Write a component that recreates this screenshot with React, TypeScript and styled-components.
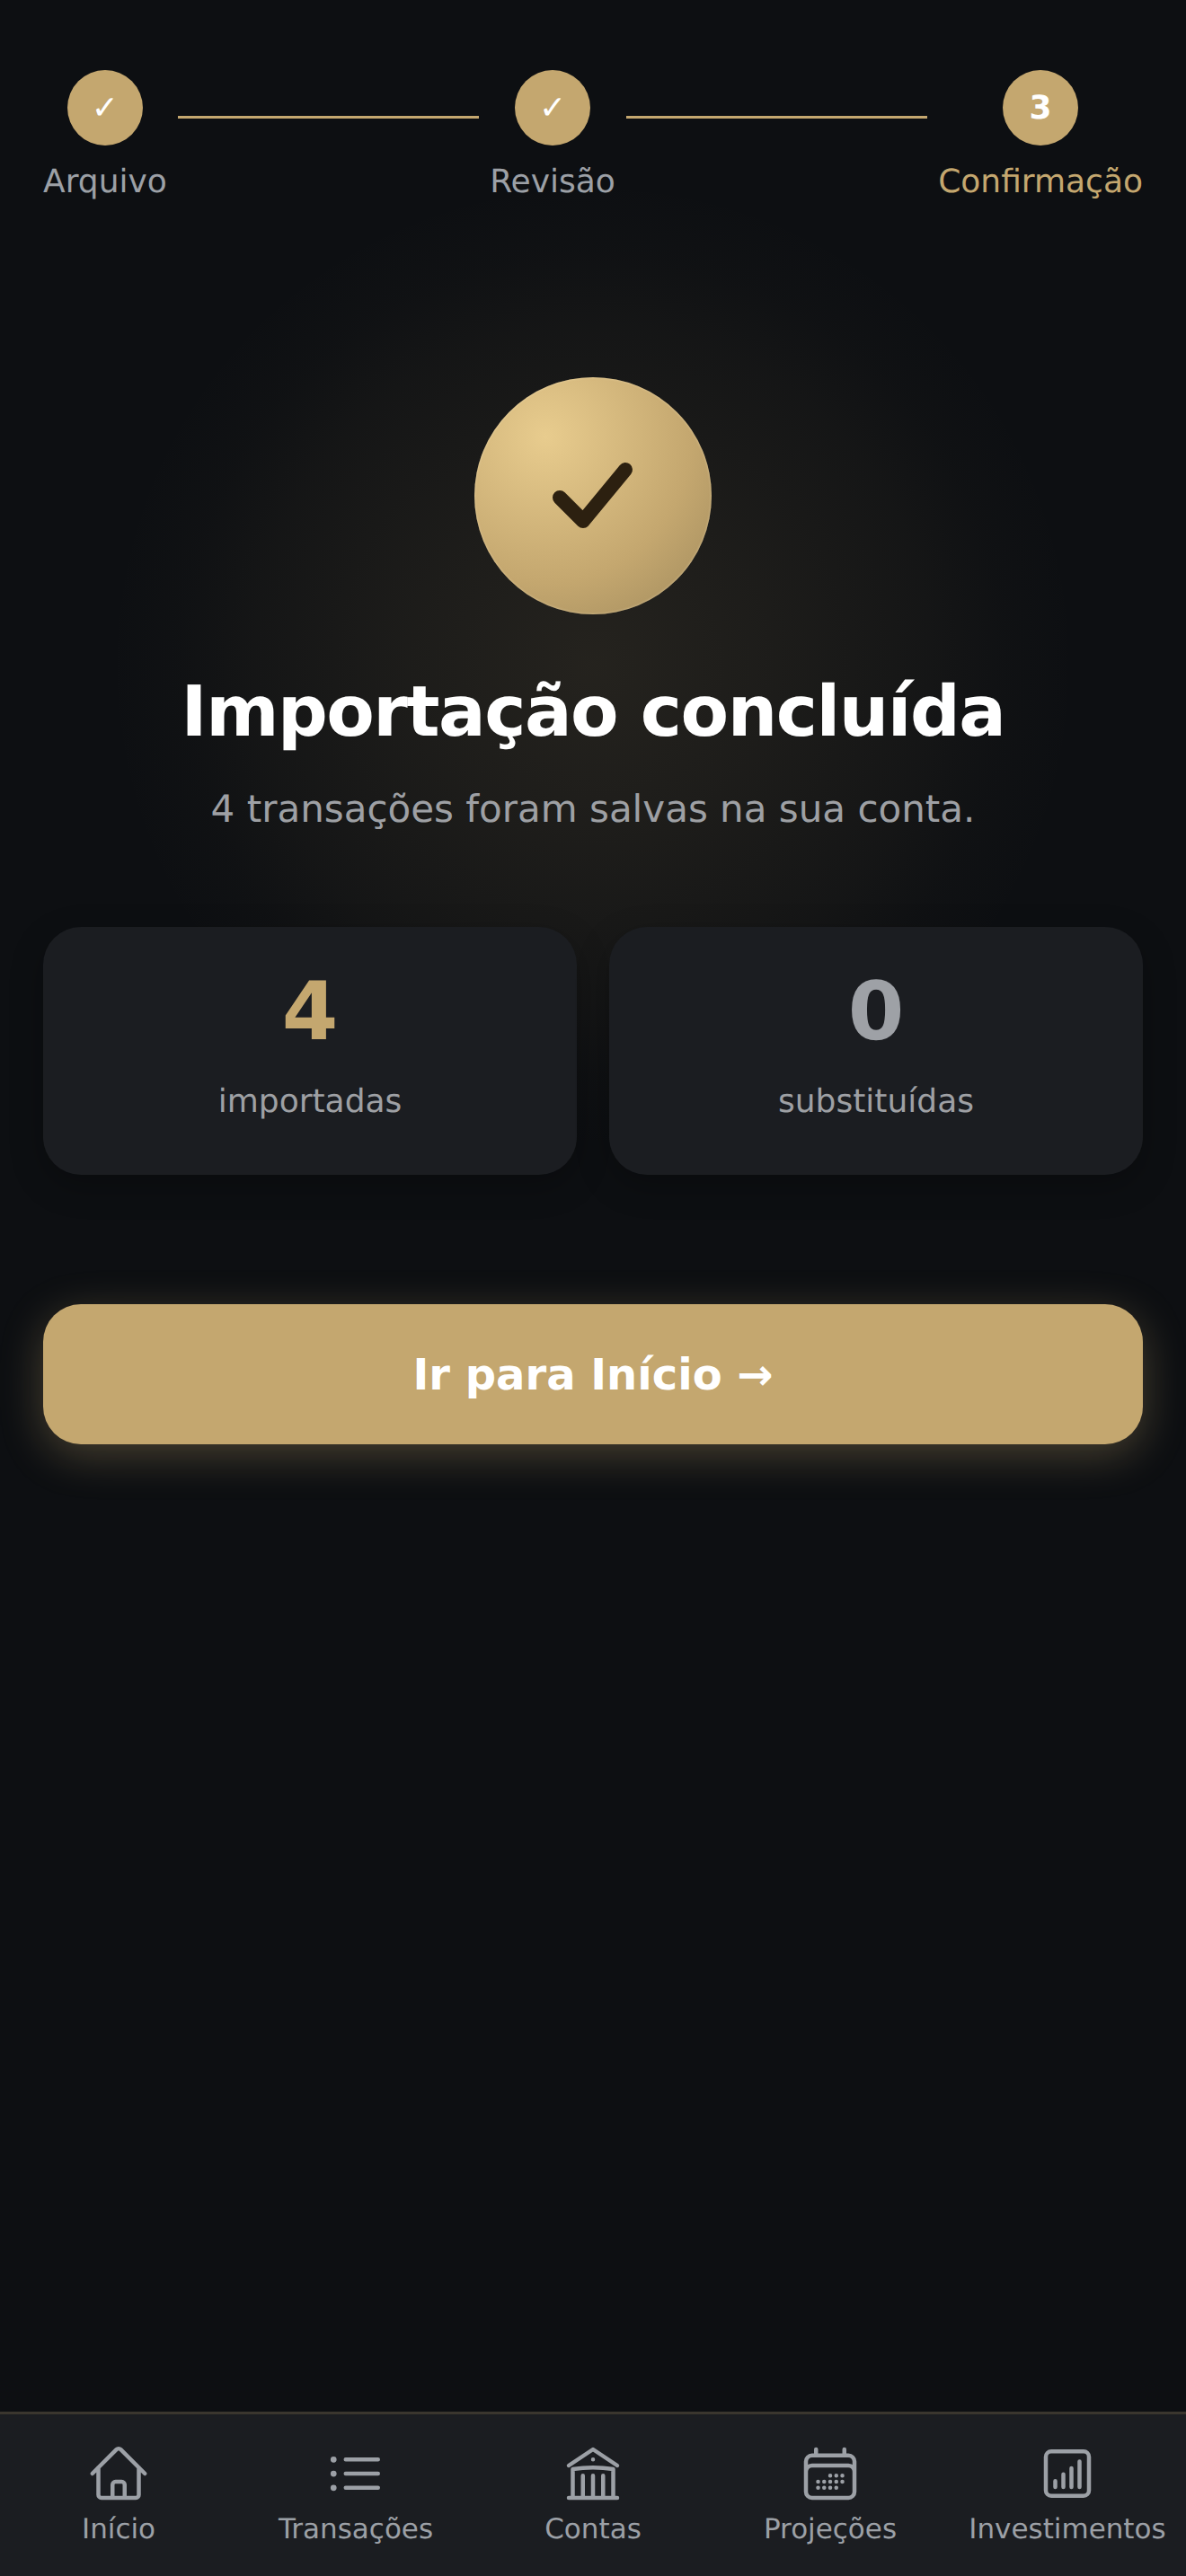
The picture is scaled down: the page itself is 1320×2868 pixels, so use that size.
import React from "react";
import styled, { createGlobalStyle } from "styled-components";

const GlobalStyle = createGlobalStyle`
  html, body {
    margin: 0;
    padding: 0;
    background: #0d0f12;
  }
  body {
    text-rendering: geometricPrecision;
  }
  * {
    box-sizing: border-box;
  }
`;

const Screen = styled.div`
  position: relative;
  width: 1320px;
  height: 2868px;
  display: flex;
  flex-direction: column;
  overflow: hidden;
  background: #0d0f12;
  font-family: "DejaVu Sans", sans-serif;
`;

const Glow = styled.div`
  position: absolute;
  top: 200px;
  left: 120px;
  width: 1080px;
  height: 1080px;
  border-radius: 50%;
  background: radial-gradient(
    circle closest-side,
    rgba(196, 167, 111, 0.13) 0%,
    rgba(196, 167, 111, 0.09) 35%,
    rgba(196, 167, 111, 0.045) 70%,
    rgba(196, 167, 111, 0.015) 85%,
    rgba(196, 167, 111, 0) 100%
  );
`;

const Main = styled.main`
  position: relative;
  flex: 1;
  display: flex;
  flex-direction: column;
  padding: 78px 48px 0;
`;

const Stepper = styled.div`
  display: flex;
  align-items: flex-start;
`;

const Step = styled.div`
  display: flex;
  flex-direction: column;
  align-items: center;
  gap: 20px;
`;

const StepDot = styled.div`
  width: 84px;
  height: 84px;
  border-radius: 50%;
  display: flex;
  align-items: center;
  justify-content: center;
  background: #c4a76f;
  color: #fff;
  font-size: 36px;
  font-weight: 700;
`;

const StepLabel = styled.span<{ $active?: boolean }>`
  font-size: 36px;
  line-height: 42px;
  color: ${(p) => (p.$active ? "#c4a76f" : "#9ca0a6")};
`;

const StepLine = styled.div`
  flex: 1;
  height: 3px;
  margin: 51px 12px 0;
  background: #c4a76f;
`;

const Hero = styled.section`
  display: flex;
  flex-direction: column;
  align-items: center;
  margin-top: 196px;
`;

const SuccessBadge = styled.div`
  width: 264px;
  height: 264px;
  border-radius: 50%;
  display: flex;
  align-items: center;
  justify-content: center;
  background: radial-gradient(circle at 30% 25%, #e8cc8e 0%, #c4a76f 60%, #a08a5c 100%);
  box-shadow: inset 0 0 3px rgba(255, 240, 200, 0.5);
`;

const Title = styled.h1`
  margin: 63px 0 0;
  font-size: 78px;
  line-height: 92px;
  font-weight: 700;
  letter-spacing: -1.5px;
  color: #fff;
`;

const Subtitle = styled.p`
  margin: 37px 0 0;
  font-size: 42px;
  line-height: 50px;
  color: #9ea0a4;
`;

const Stats = styled.div`
  display: grid;
  grid-template-columns: 1fr 1fr;
  gap: 36px;
  margin-top: 106px;
`;

const StatCard = styled.div`
  height: 276px;
  display: flex;
  flex-direction: column;
  align-items: center;
  padding-top: 45px;
  border-radius: 42px;
  background: #1b1d21;
  box-shadow: 0 12px 36px rgba(0, 0, 0, 0.25);
`;

const StatValue = styled.div<{ $gold?: boolean }>`
  font-size: 90px;
  line-height: 100px;
  font-weight: 700;
  color: ${(p) => (p.$gold ? "#c4a76f" : "#9ea1a6")};
`;

const StatLabel = styled.div`
  margin-top: 29px;
  font-size: 36px;
  line-height: 42px;
  color: #9ea0a4;
`;

const PrimaryButton = styled.button`
  height: 156px;
  margin-top: 144px;
  border: 0;
  border-radius: 42px;
  background: #c4a76f;
  color: #fff;
  font-family: inherit;
  font-size: 48px;
  font-weight: 700;
  box-shadow: 0 12px 48px rgba(196, 167, 111, 0.32);
`;

const BottomNav = styled.nav`
  position: relative;
  height: 183px;
  display: grid;
  grid-template-columns: repeat(5, 1fr);
  padding-top: 30px;
  border-top: 3px solid #3a362e;
  background: #1b1d21;
`;

const NavItem = styled.a`
  display: flex;
  flex-direction: column;
  align-items: center;
  gap: 8px;
  color: #9ca0a6;
`;

const NavIcon = styled.svg`
  width: 72px;
  height: 72px;
  fill: none;
  stroke: currentColor;
  stroke-width: 1.5;
  stroke-linecap: round;
  stroke-linejoin: round;
`;

const NavLabel = styled.span`
  font-size: 31px;
  line-height: 36px;
  white-space: nowrap;
`;

const NAV_ITEMS = [
  {
    label: "Início",
    d: "M2.25 12l8.954-8.955c.44-.439 1.152-.439 1.591 0L21.75 12M4.5 9.75v10.125c0 .621.504 1.125 1.125 1.125H9.75v-4.875c0-.621.504-1.125 1.125-1.125h2.25c.621 0 1.125.504 1.125 1.125V21h4.125c.621 0 1.125-.504 1.125-1.125V9.75M8.25 21h8.25",
  },
  {
    label: "Transações",
    d: "M8.25 6.75h12M8.25 12h12m-12 5.25h12M3.75 6.75h.007v.008H3.75V6.75zm.375 0a.375.375 0 11-.75 0 .375.375 0 01.75 0zM3.75 12h.007v.008H3.75V12zm.375 0a.375.375 0 11-.75 0 .375.375 0 01.75 0zm-.375 5.25h.007v.008H3.75v-.008zm.375 0a.375.375 0 11-.75 0 .375.375 0 01.75 0z",
  },
  {
    label: "Contas",
    d: "M12 21v-8.25M15.75 21v-8.25M8.25 21v-8.25M3 9l9-6 9 6m-1.5 12V10.332A48.36 48.36 0 0012 9.75c-2.551 0-5.056.2-7.5.582V21M3 21h18M12 6.75h.008v.008H12V6.75z",
  },
  {
    label: "Projeções",
    d: "M6.75 3v2.25M17.25 3v2.25M3 18.75V7.5a2.25 2.25 0 012.25-2.25h13.5A2.25 2.25 0 0121 7.5v11.25m-18 0A2.25 2.25 0 005.25 21h13.5A2.25 2.25 0 0021 18.75m-18 0v-7.5A2.25 2.25 0 015.25 9h13.5A2.25 2.25 0 0121 11.25v7.5m-9-6h.008v.008H12v-.008zM12 15h.008v.008H12V15zm0 2.25h.008v.008H12v-.008zM9.75 15h.008v.008H9.75V15zm0 2.25h.008v.008H9.75v-.008zM7.5 15h.008v.008H7.5V15zm0 2.25h.008v.008H7.5v-.008zm6.75-4.5h.008v.008h-.008v-.008zm0 2.25h.008v.008h-.008V15zm0 2.25h.008v.008h-.008v-.008zm2.25-4.5h.008v.008H16.5v-.008zm0 2.25h.008v.008H16.5V15z",
  },
  {
    label: "Investimentos",
    d: "M6 3.75h12a2 2 0 012 2v12.5a2 2 0 01-2 2H6a2 2 0 01-2-2V5.75a2 2 0 012-2zM7.5 14.75v2.25M10.5 12.25V17M13.5 10v7M16.5 7.5V17",
  },
];

export default function App() {
  return (
    <Screen>
      <GlobalStyle />
      <Glow />
      <Main>
        <Stepper>
          <Step>
            <StepDot>✓</StepDot>
            <StepLabel>Arquivo</StepLabel>
          </Step>
          <StepLine />
          <Step>
            <StepDot>✓</StepDot>
            <StepLabel>Revisão</StepLabel>
          </Step>
          <StepLine />
          <Step>
            <StepDot>3</StepDot>
            <StepLabel $active>Confirmação</StepLabel>
          </Step>
        </Stepper>

        <Hero>
          <SuccessBadge>
            <svg width="264" height="264" viewBox="0 0 264 264" fill="none">
              <path
                d="M95 134l26 26 47-57"
                stroke="#2c2010"
                strokeWidth="16"
                strokeLinecap="round"
                strokeLinejoin="round"
              />
            </svg>
          </SuccessBadge>
          <Title>Importação concluída</Title>
          <Subtitle>4 transações foram salvas na sua conta.</Subtitle>
        </Hero>

        <Stats>
          <StatCard>
            <StatValue $gold>4</StatValue>
            <StatLabel>importadas</StatLabel>
          </StatCard>
          <StatCard>
            <StatValue>0</StatValue>
            <StatLabel>substituídas</StatLabel>
          </StatCard>
        </Stats>

        <PrimaryButton>Ir para Início →</PrimaryButton>
      </Main>

      <BottomNav>
        {NAV_ITEMS.map((item) => (
          <NavItem key={item.label}>
            <NavIcon viewBox="0 0 24 24">
              <path d={item.d} />
            </NavIcon>
            <NavLabel>{item.label}</NavLabel>
          </NavItem>
        ))}
      </BottomNav>
    </Screen>
  );
}
